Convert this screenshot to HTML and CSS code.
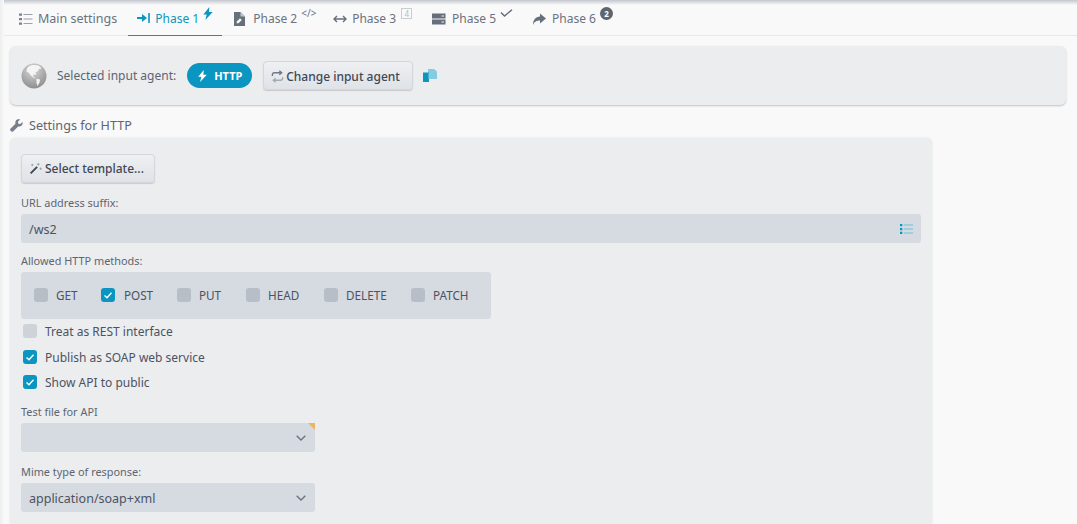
FILE: index.html
```html
<!DOCTYPE html>
<html lang="en">
<head>
<meta charset="utf-8">
<title>Settings</title>
<link rel="stylesheet" href="styles.css">
</head>
<body>
<nav class="tabs">
  <a class="tab tab-main"><svg class="ti" viewBox="0 0 14 14"><path d="M0 1.500h3v2.200H0zM0 6h3v2.200H0zM0 10.500h3v2.200H0z" fill="#7a8391"/><path d="M4.500 2.500h9M4.500 7h9M4.500 11.500h9" stroke="#9aa2ad" stroke-width="1.200"/></svg>Main settings</a>
  <a class="tab tab-active"><svg class="ti" viewBox="0 0 14 14"><path d="M0 6h5V3l5 4-5 4V8H0z" fill="#0a96c0"/><path d="M12 2v10" stroke="#0a96c0" stroke-width="1.600"/></svg>Phase 1<svg class="sup sup-bolt" viewBox="0 0 10 14"><path d="M6.500 0 0 8h3.600L2.200 14 10 5.400H6z" fill="#0a96c0"/></svg></a>
  <a class="tab tab-2"><svg class="ti ti-file" viewBox="0 0 11 14"><path d="M0 0h6.500L11 4.500V14H0z" fill="#666f7c"/><path d="M6.500 0v4.500H11z" fill="#c3c7cc"/><path d="m2.600 11.400.4-2.200 3-3 1.800 1.800-3 3z" fill="#f5f5f5"/></svg>Phase 2<span class="sup sup-code">&lt;/&gt;</span></a>
  <a class="tab tab-3"><svg class="ti ti-arrows" viewBox="0 0 14 14"><path d="M1 7h12M4 4 1 7l3 3M10 4l3 3-3 3" fill="none" stroke="#666f7c" stroke-width="1.400"/></svg>Phase 3<span class="sup sup-box">4</span></a>
  <a class="tab tab-5"><svg class="ti" viewBox="0 0 14 14"><path d="M0 1.500h13.500v5H0zM0 7.500h13.500v5H0z" fill="#666f7c"/><path d="M9.500 4H12M9.500 10H12" stroke="#f5f5f5"/></svg>Phase 5<svg class="sup sup-check" viewBox="0 0 13 8"><path d="m1 3.500 3.500 3.500L12 .7" fill="none" stroke="#666f7c" stroke-width="1.500"/></svg></a>
  <a class="tab tab-6"><svg class="ti" viewBox="0 0 14 14"><path d="M8 1.500 14 6.500 8 11.500V8.500C4.500 8.500 2.500 9.500 1 13 1 8 3.500 4.800 8 4.500z" fill="#666f7c"/></svg>Phase 6<span class="sup sup-badge">2</span></a>
</nav>

<section class="agent-panel">
  <svg class="globe" viewBox="0 0 26 26"><defs><radialGradient id="gl" cx=".45" cy=".25" r=".85"><stop offset="0" stop-color="#d8d8d8"/><stop offset="1" stop-color="#858585"/></radialGradient></defs><circle cx="13" cy="13" r="12.500" fill="url(#gl)"/><path d="M8 3.200c3-1.400 8-1.600 11 .3l1.600 2.500-2.600-.3-1 2.300-2.500 1.500.6 2.500-2.300-.5-1 1.500 2.500 2.200-1.700-.2L9.500 12 7.500 9.500 5.500 8.800 6 5.500zM15.500 15.500l3.500 1-.5 3-2 3.500-1-3.500z" fill="#f4f4f4"/></svg>
  <span class="agent-label">Selected input agent:</span>
  <span class="pill"><svg class="pill-bolt" viewBox="0 0 10 14"><path d="M6.500 0 0 8h3.600L2.200 14 10 5.400H6z" fill="#fff"/></svg>HTTP</span>
  <button class="btn btn-change"><svg class="bi" viewBox="0 0 14 14"><path d="M1.500 6.500V5a2 2 0 0 1 2-2h7M9 .8 11.500 3 9 5.200" fill="none" stroke="#6f7885" stroke-width="1.500"/><path d="M12.500 7.500V9a2 2 0 0 1-2 2h-7M5 8.800 2.500 11 5 13.200" fill="none" stroke="#a4abb5" stroke-width="1.500"/></svg>Change input agent</button>
  <svg class="copy" viewBox="0 0 14 14"><path d="M5 0h6l3 2.500V10H5z" fill="#86cbe2"/><path d="M0 3.500h6V13H0z" fill="#0a96c0"/><path d="M5 3.500h1V10H5z" fill="#4fb1d2"/></svg>
</section>

<h2 class="section-title"><svg class="wrench" viewBox="0 0 14 14"><path d="M13.500 3.200 11 5.500 9 5 8.500 3 11 .6C9-.2 6.800.5 6 2.300c-.4 1-.4 1.900-.1 2.800L.7 10.300a1.600 1.600 0 0 0 0 2.300l.6.600a1.600 1.600 0 0 0 2.300 0l5.200-5.200c2.600.9 5.500-1.300 4.700-4.800z" fill="#777f8b"/></svg>Settings for HTTP</h2>

<section class="settings-panel">
  <button class="btn btn-template"><svg class="bi" viewBox="0 0 14 14"><path d="m1 11.500 7-7 1.500 1.500-7 7z" fill="#3f4754"/><path d="M10 1v3M8.500 2.500h3M12.500 6v2.500M11.300 7.200h2.500M3.500 2v2.500M2.300 3.200h2.500" stroke="#9aa2ad"/></svg>Select template...</button>

  <label class="field-label label-url">URL address suffix:</label>
  <div class="input input-wide"><span>/ws2</span><svg class="list-ic" viewBox="0 0 14 12"><path d="M0 .5h2.500v2.500H0zM0 4.800h2.500v2.500H0zM0 9h2.500v2.500H0z" fill="#0a96c0"/><path d="M4 1.700h10M4 6h10M4 10.300h10" stroke="#6cc0dc" stroke-width="1.300"/></svg></div>

  <label class="field-label label-methods">Allowed HTTP methods:</label>
  <div class="methods">
    <span class="method m-get"><i class="cb cb-dark"></i>GET</span>
    <span class="method m-post"><i class="cb cb-on"><svg viewBox="0 0 14 14"><path d="m3.500 7.500 2.500 2.300 4.500-5" fill="none" stroke="#fff" stroke-width="1.400"/></svg></i>POST</span>
    <span class="method m-put"><i class="cb cb-dark"></i>PUT</span>
    <span class="method m-head"><i class="cb cb-dark"></i>HEAD</span>
    <span class="method m-delete"><i class="cb cb-dark"></i>DELETE</span>
    <span class="method"><i class="cb cb-dark"></i>PATCH</span>
  </div>

  <div class="check check-rest"><i class="cb cb-off"></i>Treat as REST interface</div>
  <div class="check check-soap"><i class="cb cb-on"><svg viewBox="0 0 14 14"><path d="m3.500 7.500 2.500 2.300 4.500-5" fill="none" stroke="#fff" stroke-width="1.400"/></svg></i>Publish as SOAP web service</div>
  <div class="check check-api"><i class="cb cb-on"><svg viewBox="0 0 14 14"><path d="m3.500 7.500 2.500 2.300 4.500-5" fill="none" stroke="#fff" stroke-width="1.400"/></svg></i>Show API to public</div>

  <label class="field-label label-test">Test file for API</label>
  <div class="input input-select input-flag"><span></span><svg class="chev" viewBox="0 0 10 6"><path d="m.7.7 4.300 4.300L9.300.7" fill="none" stroke="#697280" stroke-width="1.300"/></svg></div>

  <label class="field-label label-mime">Mime type of response:</label>
  <div class="input input-select"><span>application/soap+xml</span><svg class="chev" viewBox="0 0 10 6"><path d="m.7.7 4.300 4.300L9.300.7" fill="none" stroke="#697280" stroke-width="1.300"/></svg></div>
</section>
</body>
</html>
```
FILE: styles.css
```css
* { box-sizing: border-box; }
html, body { margin: 0; height: 524px; overflow: hidden; }
body {
  background: #f9f9f9;
  font-family: "Noto Sans", "Open Sans", sans-serif;
  color: #4b5362;
  font-size: 12px;
  padding-left: 10px;
  position: relative;
}
body::before {
  content: "";
  position: absolute;
  left: 0; right: 0; top: 0;
  height: 5px;
  background: linear-gradient(#c4c7ce, #f9f9f9);
}
body::after {
  content: "";
  position: absolute;
  left: 0; top: 0; bottom: 0;
  width: 4px;
  background: linear-gradient(90deg, #eceded, #f9f9f9);
}

.tabs {
  display: flex;
  height: 36px;
  margin-left: -10px;
  border-bottom: 1px solid #e8e9eb;
  align-items: stretch;
}
.tab {
  display: flex;
  align-items: center;
  height: 36px;
  padding-top: 1px;
  font-size: 12px;
  color: #697280;
  position: relative;
}
.ti { width: 14px; height: 14px; margin-right: 6px; flex: none; }
.ti-file { width: 11px; margin-right: 8px; }
.ti-arrows { margin-right: 5px; }
.tab-main { margin-left: 19px; font-size: 12.500px; }
.tab-main .ti { margin-right: 5px; }
.tab-active {
  margin-left: 11px;
  width: 94px;
  padding-left: 9px;
  color: #0a96c0;
  border-bottom: 1px solid #0a96c0;
}
.tab-active .ti { margin-right: 4px; }
.tab-2 { margin-left: 12px; }
.tab-3, .tab-5, .tab-6 { margin-left: 36px; }

.sup { position: absolute; }
.sup-bolt { width: 10px; height: 13px; top: 7px; right: 9px; }
.sup-code { font-size: 10px; top: 7px; left: 67px; line-height: 12px; white-space: nowrap; }
.sup-box {
  width: 11px; height: 11px; top: 8px; left: 68px;
  border: 1px solid #c9cdd2; color: #b5bac1;
  font-size: 8px; line-height: 9px; text-align: center;
}
.sup-check { width: 13px; height: 8px; top: 9px; left: 68px; }
.sup-badge {
  width: 13px; height: 13px; top: 7px; left: 68px;
  border-radius: 50%; background: #5d6572; color: #fff;
  font-size: 8px; line-height: 13px; text-align: center; font-weight: 700;
}

.agent-panel {
  display: flex;
  align-items: center;
  width: 1056px;
  height: 59px;
  margin-top: 10px;
  padding-left: 11px;
  background: #ecedef;
  border-radius: 6px;
  box-shadow: 0 1px 2px rgba(90, 95, 105, .35);
}
.globe { width: 26px; height: 26px; flex: none; }
.agent-label { margin-left: 10px; font-size: 12px; color: #5d6572; }
.pill {
  display: flex;
  align-items: center;
  height: 25px;
  width: 65px;
  margin-left: 11px;
  padding-left: 11px;
  border-radius: 13px;
  background: #0a96c0;
  color: #fff;
  font-size: 11px;
  font-weight: 700;
}
.pill-bolt { width: 9px; height: 12px; margin-right: 7px; }

.btn {
  display: flex;
  align-items: center;
  height: 29px;
  padding: 0;
  border: 1px solid #d3d7dd;
  border-radius: 4px;
  background: linear-gradient(#eef0f2, #dfe2e7);
  box-shadow: 0 1px 1px rgba(90, 95, 105, .25);
  font: inherit;
  font-size: 12px;
  font-weight: 500;
  color: #3f4754;
}
.bi { width: 13px; height: 13px; margin-right: 3px; flex: none; }
.btn-change { width: 150px; margin-left: 11px; padding: 1px 0 0 7px; }
.btn-change .bi { margin-right: 2px; }
.btn-template { width: 134px; padding-left: 7px; }
.copy { width: 14px; height: 14px; margin-left: 10px; }

.section-title {
  display: flex;
  align-items: center;
  height: 18px;
  margin: 11px 0 4px;
  font-size: 12.600px;
  font-weight: 400;
  color: #5d6572;
}
.wrench { width: 13px; height: 13px; margin-right: 6px; }

.settings-panel {
  width: 922px;
  height: 386px;
  padding: 16px 11px 0 11px;
  background: #ecedef;
  border-radius: 6px 6px 0 0;
  box-shadow: 0 0 2px rgba(90, 95, 105, .2);
}
.field-label {
  display: block;
  height: 14px;
  line-height: 14px;
  font-size: 10.900px;
  color: #5d6572;
}
.label-url { margin-top: 13px; margin-bottom: 4px; }
.label-methods { margin-top: 11px; margin-bottom: 4px; }
.label-test { margin-top: 15px; margin-bottom: 4px; }
.label-mime { margin-top: 13px; margin-bottom: 4px; }

.input {
  display: flex;
  align-items: center;
  justify-content: space-between;
  height: 29px;
  padding: 1px 8px 0;
  border-radius: 3px;
  background: #d6dae1;
  font-size: 12.500px;
  color: #4b5362;
  position: relative;
}
.input-select { width: 294px; padding-right: 9px; }
.list-ic { width: 13px; height: 12px; flex: none; }
.chev { width: 10px; height: 6px; }
.input-flag::after {
  content: "";
  position: absolute;
  top: 0; right: 0;
  border-top: 7px solid #f0b45f;
  border-left: 7px solid transparent;
}

.methods {
  display: flex;
  align-items: center;
  width: 470px;
  height: 47px;
  padding: 0 0 2px 13px;
  border-radius: 3px;
  background: #d6dae1;
  font-size: 11.700px;
}
.method { display: flex; align-items: center; color: #4b5362; }
.m-get { width: 67px; }
.m-post { width: 76px; }
.m-put { width: 69px; }
.m-head { width: 78px; }
.m-delete { width: 87px; }

.cb {
  display: block;
  width: 14px;
  height: 14px;
  margin-right: 8px;
  border-radius: 3px;
  flex: none;
}
.cb svg { display: block; width: 14px; height: 14px; }
.cb-dark { background: #b8bec8; }
.cb-off { background: #ced2d9; }
.cb-on { background: #0a96c0; }
.m-post .cb { margin-right: 9px; }

.check {
  display: flex;
  align-items: center;
  height: 16px;
  padding-left: 2px;
  font-size: 12px;
  color: #4b5362;
}
.check .cb { margin-right: 8px; }
.check-rest { margin-top: 4px; }
.check-soap { margin-top: 10px; }
.check-api { margin-top: 9px; }
```
